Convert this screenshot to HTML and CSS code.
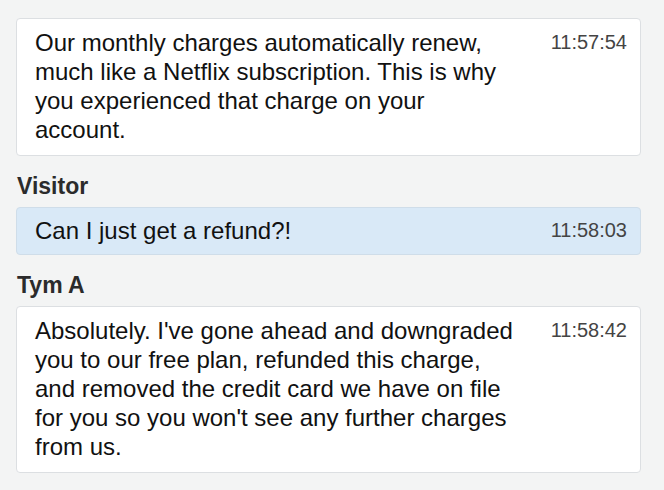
FILE: index.html
```html
<!DOCTYPE html>
<html lang="en">
<head>
    <meta charset="UTF-8">
    <title>Chat transcript</title>
    <link rel="stylesheet" href="styles.css">
</head>
<body>
    <div class="transcript">
        <div class="message">
            <p class="message-text">Our monthly charges automatically renew, much like a Netflix subscription. This is why you experienced that charge on your account.</p>
            <span class="message-time">11:57:54</span>
        </div>

        <h2 class="sender">Visitor</h2>
        <div class="message visitor">
            <p class="message-text">Can I just get a refund?!</p>
            <span class="message-time">11:58:03</span>
        </div>

        <h2 class="sender">Tym A</h2>
        <div class="message">
            <p class="message-text">Absolutely. I've gone ahead and downgraded you to our free plan, refunded this charge, and removed the credit card we have on file for you so you won't see any further charges from us.</p>
            <span class="message-time">11:58:42</span>
        </div>
    </div>
</body>
</html>
```

FILE: styles.css
```css
body {
    margin: 0;
    background-color: #f3f4f4;
    font-family: "Liberation Sans", Arial, Helvetica, sans-serif;
    color: #111;
}
.transcript {
    width: 625px;
    padding: 18px 0 0 16px;
}
.message {
    display: flex;
    align-items: flex-start;
    justify-content: space-between;
    background-color: #fff;
    border: 1px solid #dcdfe2;
    border-radius: 4px;
    padding: 9px 13px 11px 18px;
}
.message.visitor {
    background-color: #d9e9f7;
    border-color: #cfdde9;
    padding-top: 8px;
    padding-bottom: 9px;
}
.message-text {
    width: 486px;
    margin: 0;
    font-size: 24px;
    line-height: 29px;
}
.message-time {
    font-size: 20px;
    line-height: 29px;
    color: #444;
}
.sender {
    margin: 18px 0 9px 1px;
    font-size: 23px;
    line-height: 24px;
    font-weight: 700;
    color: #2b2b2b;
}
```
